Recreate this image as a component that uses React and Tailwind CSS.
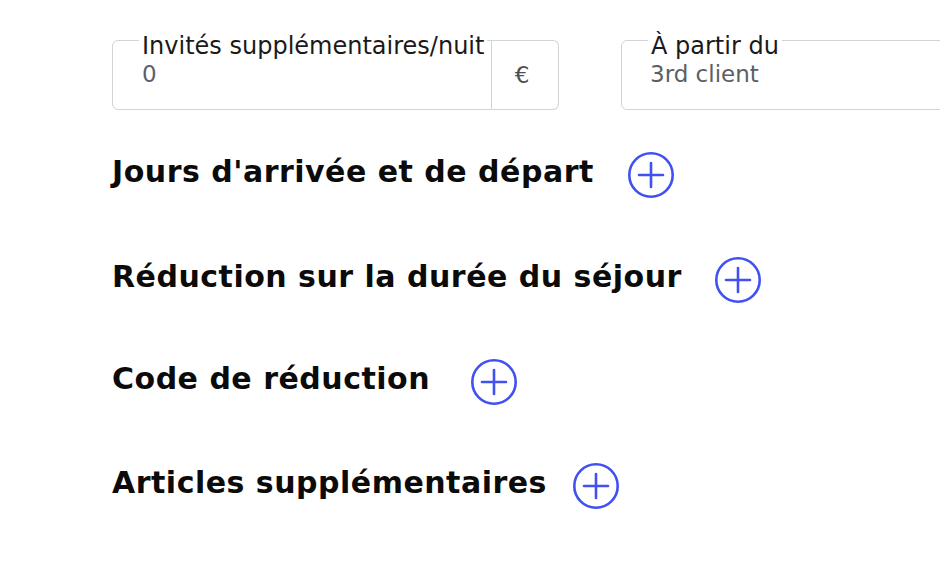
const font = { fontFamily: '"DejaVu Sans", Inter, sans-serif' };

function PlusCircle() {
  return (
    <svg width="46" height="46" viewBox="0 0 46 46" fill="none" className="shrink-0">
      <circle cx="23" cy="23" r="21.7" stroke="#4150f2" strokeWidth="2.6" />
      <path d="M23 11v24M11 23h24" stroke="#4150f2" strokeWidth="2.6" strokeLinecap="round" />
    </svg>
  );
}

function Section({ title, gap, top }) {
  return (
    <div className={`flex items-center h-[46px] ${top} ${gap}`}>
      <h2 className="pb-[7px] text-[30px] font-bold leading-[30px] tracking-[0.5px] text-[#0b0b0b] whitespace-nowrap">
        {title}
      </h2>
      <button type="button" aria-label={`Ajouter ${title}`}>
        <PlusCircle />
      </button>
    </div>
  );
}

export default function App() {
  return (
    <div className="w-[940px] h-[570px] overflow-hidden bg-white" style={font}>
      <div className="pl-[112px] pt-[21px]">
        <div className="flex items-end gap-[62px] w-[1200px]">
          <div className="flex items-end">
            <fieldset className="w-[380px] h-[89px] border border-[#d0d3d8] rounded-l-md p-0 m-0">
              <legend className="ml-[26px] px-[3px] pt-[12px] text-[24px] leading-[26px] text-[#1a1a1a] whitespace-nowrap">
                Invités supplémentaires/nuit
              </legend>
              <div className="pl-[29px] pt-[1px] text-[23px] leading-[28px] text-[#5b5f66]">0</div>
            </fieldset>
            <div className="w-[67px] h-[70px] pr-[6px] border border-l-0 border-[#d0d3d8] rounded-r-md flex items-center justify-center text-[23px] text-[#4a4e55]">
              €
            </div>
          </div>
          <fieldset className="w-[446px] h-[89px] border border-[#d0d3d8] rounded-md p-0 m-0">
            <legend className="ml-[26px] px-[3px] pt-[12px] text-[24px] leading-[26px] text-[#1a1a1a] whitespace-nowrap">
              À partir du
            </legend>
            <div className="pl-[28px] pt-[1px] text-[23px] leading-[28px] text-[#5b5f66]">3rd client</div>
          </fieldset>
        </div>

        <Section title="Jours d'arrivée et de départ" gap="gap-[34px]" top="mt-[42px]" />
        <Section title="Réduction sur la durée du séjour" gap="gap-[33px]" top="mt-[59px]" />
        <Section title="Code de réduction" gap="gap-[41px]" top="mt-[56px]" />
        <Section title="Articles supplémentaires" gap="gap-[26px]" top="mt-[58px]" />
      </div>
    </div>
  );
}
